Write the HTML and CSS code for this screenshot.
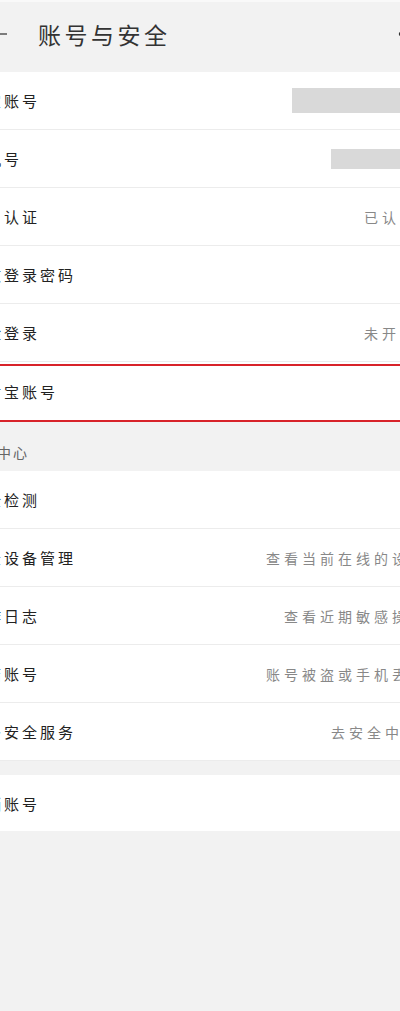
FILE: index.html
```html
<!DOCTYPE html>
<html lang="zh-CN">
<head>
    <meta charset="UTF-8">
    <meta name="viewport" content="width=device-width, initial-scale=1.0">
    <title>账号与安全</title>
    <link rel="stylesheet" href="styles.css">
</head>
<body>
    <div class="screen">
        <header class="topbar">
            <svg class="back" width="22" height="16" viewBox="0 0 22 16">
                <path d="M21 8H2M8 2L2 8l6 6" fill="none" stroke="#555" stroke-width="1.6"/>
            </svg>
            <h1 class="title">账号与安全</h1>
            <svg class="more" width="20" height="6" viewBox="0 0 20 6">
                <circle cx="3" cy="3" r="2.2" fill="#333"/>
                <circle cx="10" cy="3" r="2.2" fill="#333"/>
                <circle cx="17" cy="3" r="2.2" fill="#333"/>
            </svg>
        </header>

        <div class="group">
            <div class="row">
                <span class="label">淘宝账号</span>
                <span class="mask mask-long"></span>
            </div>
            <div class="row">
                <span class="label">手机号</span>
                <span class="mask mask-short"></span>
            </div>
            <div class="row">
                <span class="label">实名认证</span>
                <span class="value status">已认证</span>
            </div>
            <div class="row">
                <span class="label">修改登录密码</span>
            </div>
            <div class="row">
                <span class="label">刷脸登录</span>
                <span class="value status">未开启</span>
            </div>
            <div class="row row-marked">
                <span class="label">支付宝账号</span>
            </div>
        </div>

        <div class="section-title">安全中心</div>

        <div class="group">
            <div class="row">
                <span class="label">安全检测</span>
            </div>
            <div class="row">
                <span class="label">登录设备管理</span>
                <span class="value">查看当前在线的设备</span>
            </div>
            <div class="row">
                <span class="label">操作日志</span>
                <span class="value">查看近期敏感操作</span>
            </div>
            <div class="row">
                <span class="label">冻结账号</span>
                <span class="value">账号被盗或手机丢失</span>
            </div>
            <div class="row">
                <span class="label">更多安全服务</span>
                <span class="value go">去安全中心</span>
            </div>
        </div>

        <div class="group group-gap">
            <div class="row row-last">
                <span class="label">注销账号</span>
            </div>
        </div>
    </div>
</body>
</html>
```

FILE: styles.css
```css
html, body {
    margin: 0;
    padding: 0;
    overflow: hidden;
    background: #f2f2f2;
}
body {
    font-family: "Noto Sans CJK SC", "Noto Sans", sans-serif;
    color: #222;
}
/* the capture is cropped: the screen is wider than the window */
.screen {
    width: 480px;
    margin-left: -32px;
    min-height: 1011px;
    background: #f2f2f2;
}
.topbar {
    display: flex;
    align-items: center;
    height: 64px;
    padding: 0 30px 6px 18px;
    border-top: 2px solid #f9f9f9;
    background: #f2f2f2;
}
.back {
    display: block;
}
.title {
    margin: 0 0 0 30px;
    font-size: 23px;
    font-weight: 400;
    letter-spacing: 3.5px;
    color: #333;
}
.more {
    display: block;
    margin-left: auto;
}
.group {
    background: #fff;
}
.group-gap {
    margin-top: 14px;
}
.row {
    display: flex;
    align-items: center;
    height: 57px;
    padding-right: 20px;
    border-bottom: 1px solid #ececec;
}
.row-marked {
    height: 54px;
    margin-top: 2px;
    border: 2px solid #d8232a;
    border-left: 0;
    border-right: 0;
}
.row-marked .label {
    margin-top: -4px;
}
.row-last {
    height: 56px;
    border-bottom: 0;
}
.label {
    font-size: 15px;
    letter-spacing: 3px;
    white-space: nowrap;
}
.value {
    margin-left: auto;
    font-size: 14px;
    letter-spacing: 4px;
    color: #888;
    white-space: nowrap;
}
.value.status {
    margin-right: 10px;
}
.value.go {
    margin-right: 7px;
}
.mask {
    margin-left: auto;
    background: #d9d9d9;
}
.mask-long {
    width: 136px;
    height: 25px;
}
.mask-short {
    width: 97px;
    height: 20px;
}
.section-title {
    padding: 20px 0 9px;
    line-height: 20px;
    font-size: 14px;
    letter-spacing: 2px;
    color: #666;
    text-indent: -3px;
}
```
